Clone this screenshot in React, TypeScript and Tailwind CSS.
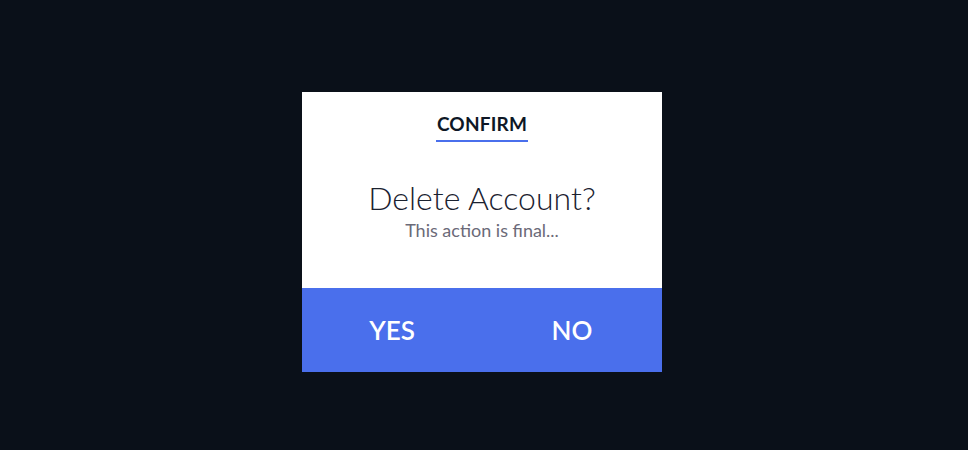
export default function App() {
  return (
    <div
      className="w-[968px] h-[450px] bg-[#0a1019] flex justify-center pt-[92px] pr-[4px]"
      style={{ fontFamily: "Lato, 'Noto Sans', sans-serif" }}
    >
      <div className="w-[360px] h-[280px] bg-white flex flex-col">
        <div className="flex-1 flex flex-col items-center">
          <div className="mt-[20px] text-[19px] font-bold text-[#0e1726] tracking-[0.2px] leading-[24px] border-b-2 border-[#4a6fec] px-[1px] pb-[4px]">
            CONFIRM
          </div>
          <div className="mt-[38px] text-[32px] font-light text-[#1b2230] leading-[36px]">
            Delete Account?
          </div>
          <div className="mt-[4px] text-[18px] text-[#6b6a78] leading-[20px]">
            This action is final...
          </div>
        </div>
        <div className="h-[84px] bg-[#4a6fec] grid grid-cols-2 text-white text-[26px] font-semibold">
          <button className="flex items-center justify-center">YES</button>
          <button className="flex items-center justify-center">NO</button>
        </div>
      </div>
    </div>
  );
}
